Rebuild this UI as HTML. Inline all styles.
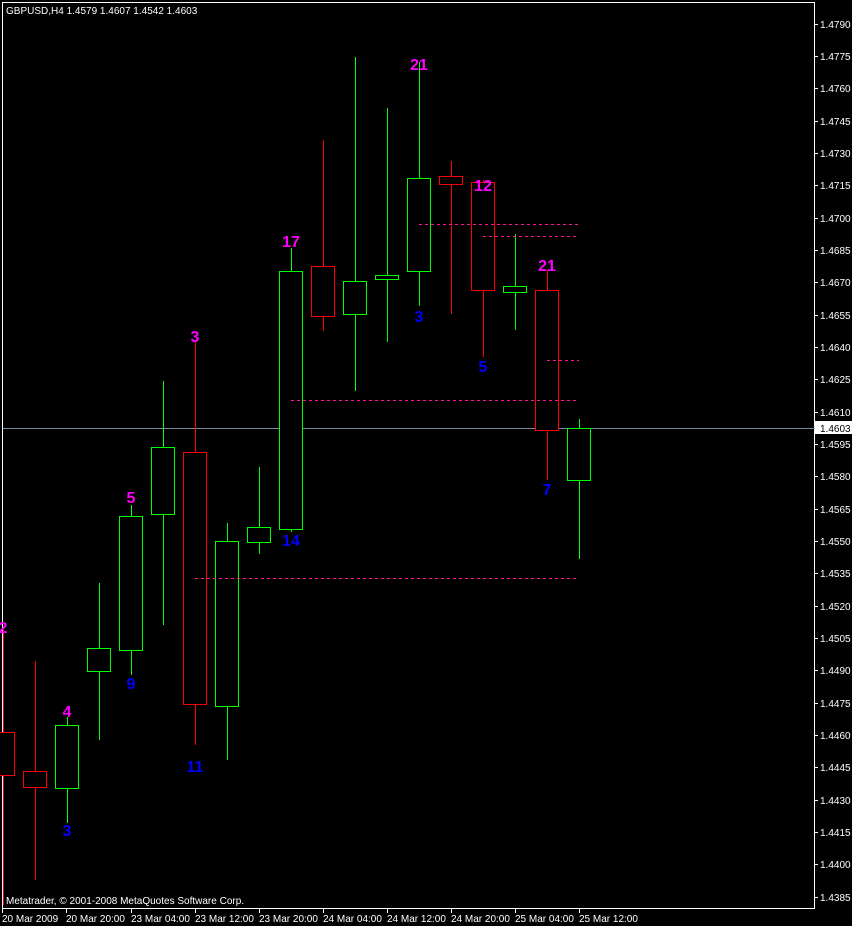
<!DOCTYPE html>
<html><head><meta charset="utf-8"><style>
html,body{margin:0;padding:0;background:#000;}
svg{display:block}
text{font-family:"Liberation Sans",sans-serif;}
.ax{fill:#fff;font-size:10px}
.m{fill:#ff00ff;font-size:16px;font-weight:bold;text-anchor:middle}
.b{fill:#0000ff;font-size:16px;font-weight:bold;text-anchor:middle}
</style></head><body>
<svg width="852" height="926" viewBox="0 0 852 926" xmlns="http://www.w3.org/2000/svg" shape-rendering="crispEdges">
<rect width="852" height="926" fill="#000"/>
<rect x="2.5" y="2.5" width="812" height="906" fill="none" stroke="#fff"/>
<text x="6" y="14" class="ax">GBPUSD,H4  1.4579 1.4607 1.4542 1.4603</text>
<line x1="3" y1="428.5" x2="815" y2="428.5" stroke="#778899"/>
<g fill="#000">
<g stroke="#ff0000">
<line x1="3.5" y1="630" x2="3.5" y2="905"/><rect x="-8.5" y="732.5" width="23" height="43"/>
<line x1="35.5" y1="661" x2="35.5" y2="880"/><rect x="23.5" y="771.5" width="23" height="16"/>
<line x1="195.5" y1="342" x2="195.5" y2="745"/><rect x="183.5" y="452.5" width="23" height="252"/>
<line x1="323.5" y1="140" x2="323.5" y2="331"/><rect x="311.5" y="266.5" width="23" height="50"/>
<line x1="451.5" y1="161" x2="451.5" y2="314"/><rect x="439.5" y="176.5" width="23" height="8"/>
<line x1="483.5" y1="180" x2="483.5" y2="357"/><rect x="471.5" y="182.5" width="23" height="108"/>
<line x1="547.5" y1="270" x2="547.5" y2="480"/><rect x="535.5" y="290.5" width="23" height="140"/>
</g>
<g stroke="#00ff00">
<line x1="67.5" y1="717" x2="67.5" y2="823"/><rect x="55.5" y="725.5" width="23" height="63"/>
<line x1="99.5" y1="583" x2="99.5" y2="740"/><rect x="87.5" y="648.5" width="23" height="23"/>
<line x1="131.5" y1="505" x2="131.5" y2="675"/><rect x="119.5" y="516.5" width="23" height="134"/>
<line x1="163.5" y1="381" x2="163.5" y2="625"/><rect x="151.5" y="447.5" width="23" height="67"/>
<line x1="227.5" y1="523" x2="227.5" y2="760"/><rect x="215.5" y="541.5" width="23" height="165"/>
<line x1="259.5" y1="467" x2="259.5" y2="554"/><rect x="247.5" y="527.5" width="23" height="15"/>
<line x1="291.5" y1="248" x2="291.5" y2="532"/><rect x="279.5" y="271.5" width="23" height="258"/>
<line x1="355.5" y1="57" x2="355.5" y2="391"/><rect x="343.5" y="281.5" width="23" height="33"/>
<line x1="387.5" y1="108" x2="387.5" y2="342"/><rect x="375.5" y="275.5" width="23" height="4"/>
<line x1="419.5" y1="62" x2="419.5" y2="306"/><rect x="407.5" y="178.5" width="23" height="93"/>
<line x1="515.5" y1="234" x2="515.5" y2="330"/><rect x="503.5" y="286.5" width="23" height="6"/>
<line x1="579.5" y1="419" x2="579.5" y2="559"/><rect x="567.5" y="428.5" width="23" height="52"/>
</g>
</g>
<g stroke="#ff1493" stroke-dasharray="3,3">
<line x1="419" y1="224.5" x2="578" y2="224.5"/>
<line x1="483" y1="236.5" x2="577" y2="236.5"/>
<line x1="547" y1="360.5" x2="579" y2="360.5"/>
<line x1="291" y1="400.5" x2="576" y2="400.5"/>
<line x1="195" y1="578.5" x2="576" y2="578.5"/>
</g>
<text x="3" y="633" class="m">2</text>
<text x="67" y="717" class="m">4</text>
<text x="131" y="503" class="m">5</text>
<text x="195" y="342" class="m">3</text>
<text x="291" y="247" class="m">17</text>
<text x="419" y="70" class="m">21</text>
<text x="483" y="191" class="m">12</text>
<text x="547" y="271" class="m">21</text>
<text x="67" y="836" class="b">3</text>
<text x="131" y="689" class="b">9</text>
<text x="195" y="772" class="b">11</text>
<text x="291" y="546" class="b">14</text>
<text x="419" y="322" class="b">3</text>
<text x="483" y="372" class="b">5</text>
<text x="547" y="495" class="b">7</text>
<text x="6" y="904" class="ax">Metatrader, © 2001-2008 MetaQuotes Software Corp.</text>
<g stroke="#fff">
<line x1="815" y1="24.5" x2="818" y2="24.5"/><line x1="815" y1="56.5" x2="818" y2="56.5"/><line x1="815" y1="88.5" x2="818" y2="88.5"/><line x1="815" y1="121.5" x2="818" y2="121.5"/><line x1="815" y1="153.5" x2="818" y2="153.5"/><line x1="815" y1="185.5" x2="818" y2="185.5"/><line x1="815" y1="218.5" x2="818" y2="218.5"/><line x1="815" y1="250.5" x2="818" y2="250.5"/><line x1="815" y1="282.5" x2="818" y2="282.5"/><line x1="815" y1="315.5" x2="818" y2="315.5"/><line x1="815" y1="347.5" x2="818" y2="347.5"/><line x1="815" y1="379.5" x2="818" y2="379.5"/><line x1="815" y1="412.5" x2="818" y2="412.5"/><line x1="815" y1="444.5" x2="818" y2="444.5"/><line x1="815" y1="476.5" x2="818" y2="476.5"/><line x1="815" y1="509.5" x2="818" y2="509.5"/><line x1="815" y1="541.5" x2="818" y2="541.5"/><line x1="815" y1="573.5" x2="818" y2="573.5"/><line x1="815" y1="606.5" x2="818" y2="606.5"/><line x1="815" y1="638.5" x2="818" y2="638.5"/><line x1="815" y1="670.5" x2="818" y2="670.5"/><line x1="815" y1="703.5" x2="818" y2="703.5"/><line x1="815" y1="735.5" x2="818" y2="735.5"/><line x1="815" y1="767.5" x2="818" y2="767.5"/><line x1="815" y1="800.5" x2="818" y2="800.5"/><line x1="815" y1="832.5" x2="818" y2="832.5"/><line x1="815" y1="864.5" x2="818" y2="864.5"/><line x1="815" y1="897.5" x2="818" y2="897.5"/>
</g>
<g class="ax">
<text x="820" y="28">1.4790</text><text x="820" y="60">1.4775</text><text x="820" y="92">1.4760</text><text x="820" y="125">1.4745</text><text x="820" y="157">1.4730</text><text x="820" y="189">1.4715</text><text x="820" y="222">1.4700</text><text x="820" y="254">1.4685</text><text x="820" y="286">1.4670</text><text x="820" y="319">1.4655</text><text x="820" y="351">1.4640</text><text x="820" y="383">1.4625</text><text x="820" y="416">1.4610</text><text x="820" y="448">1.4595</text><text x="820" y="480">1.4580</text><text x="820" y="513">1.4565</text><text x="820" y="545">1.4550</text><text x="820" y="577">1.4535</text><text x="820" y="610">1.4520</text><text x="820" y="642">1.4505</text><text x="820" y="674">1.4490</text><text x="820" y="707">1.4475</text><text x="820" y="739">1.4460</text><text x="820" y="771">1.4445</text><text x="820" y="804">1.4430</text><text x="820" y="836">1.4415</text><text x="820" y="868">1.4400</text><text x="820" y="901">1.4385</text>
</g>
<rect x="815" y="421" width="37" height="13" fill="#fff"/>
<text x="820" y="432" style="font-size:10px;fill:#000">1.4603</text>
<g stroke="#fff">
<line x1="2.5" y1="909" x2="2.5" y2="913"/><line x1="66.5" y1="909" x2="66.5" y2="913"/><line x1="131.5" y1="909" x2="131.5" y2="913"/><line x1="195.5" y1="909" x2="195.5" y2="913"/><line x1="259.5" y1="909" x2="259.5" y2="913"/><line x1="323.5" y1="909" x2="323.5" y2="913"/><line x1="387.5" y1="909" x2="387.5" y2="913"/><line x1="451.5" y1="909" x2="451.5" y2="913"/><line x1="515.5" y1="909" x2="515.5" y2="913"/><line x1="579.5" y1="909" x2="579.5" y2="913"/>
</g>
<g class="ax">
<text x="2" y="922">20 Mar 2009</text><text x="66" y="922">20 Mar 20:00</text><text x="131" y="922">23 Mar 04:00</text><text x="195" y="922">23 Mar 12:00</text><text x="259" y="922">23 Mar 20:00</text><text x="323" y="922">24 Mar 04:00</text><text x="387" y="922">24 Mar 12:00</text><text x="451" y="922">24 Mar 20:00</text><text x="515" y="922">25 Mar 04:00</text><text x="579" y="922">25 Mar 12:00</text>
</g>
</svg>
</body></html>
